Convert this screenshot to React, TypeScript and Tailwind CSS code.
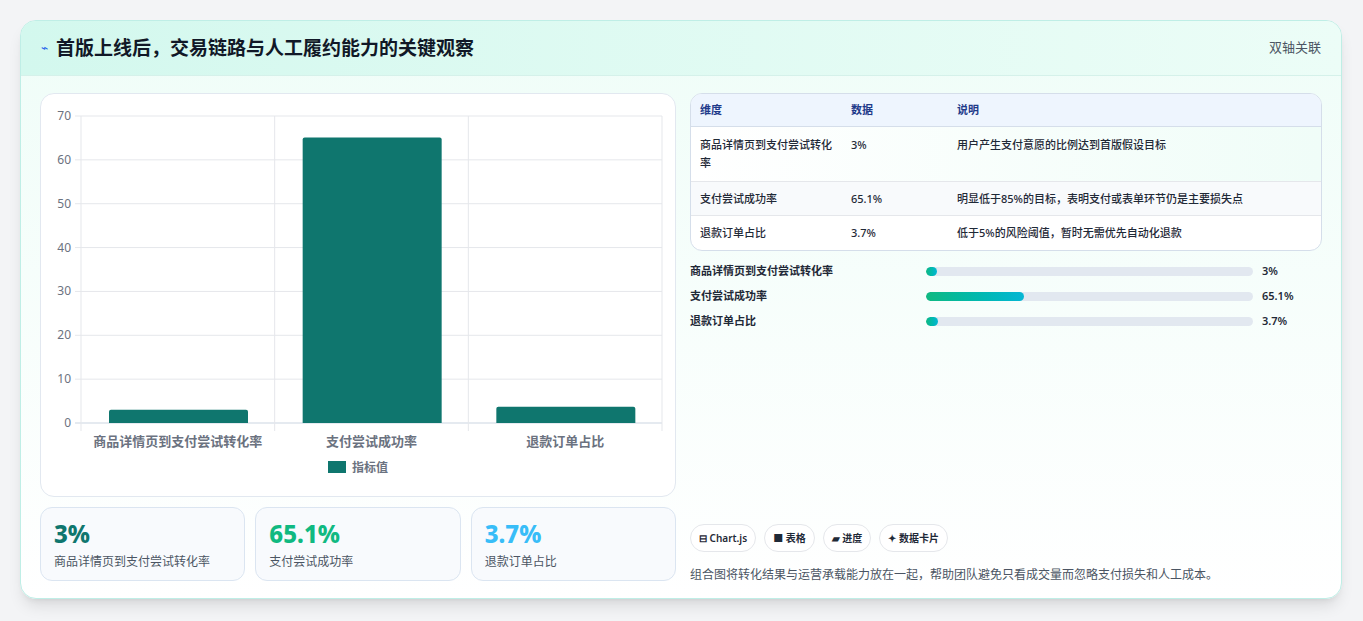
import React from "react";

const F = { fontFamily: '"Noto Sans", "Noto Sans CJK SC", sans-serif' };

function Chart() {
  const L = 40, R = 621, T = 22, B = 329;
  const k = (B - T) / 70;
  const cw = (R - L) / 3;
  const data = [
    { n: "商品详情页到支付尝试转化率", v: 3 },
    { n: "支付尝试成功率", v: 65.1 },
    { n: "退款订单占比", v: 3.7 },
  ];
  return (
    <svg width="635" height="401" className="block">
      {[0, 1, 2, 3, 4, 5, 6, 7].map((i) => {
        const y = B - i * 10 * k;
        return (
          <g key={i}>
            <line x1={L - 6} x2={R} y1={y} y2={y} stroke={i === 0 ? "#cbd5e1" : "#e5e7eb"} />
            <text x={L - 10} y={y + 4} textAnchor="end" fontSize="12" fill="#6b7280" style={F}>{i * 10}</text>
          </g>
        );
      })}
      {[0, 1, 2, 3].map((i) => (
        <line key={i} x1={L + i * cw} x2={L + i * cw} y1={T} y2={B + 8} stroke="#e5e7eb" />
      ))}
      {data.map((d, i) => {
        const h = d.v * k;
        const x = L + i * cw + 28;
        return (
          <g key={i}>
            <path d={`M${x} ${B} V${B - h + 2} Q${x} ${B - h} ${x + 2} ${B - h} H${x + 137} Q${x + 139} ${B - h} ${x + 139} ${B - h + 2} V${B}Z`} fill="#0f766e" />
            <text x={L + i * cw + cw / 2} y={B + 23} textAnchor="middle" fontSize="13" fontWeight="600" fill="#6b7280" style={F}>{d.n}</text>
          </g>
        );
      })}
      <rect x="287" y="367" width="18" height="12" fill="#0f766e" />
      <text x="311" y="378" fontSize="12" fontWeight="600" fill="#6b7280" style={F}>指标值</text>
    </svg>
  );
}

export default function App() {
  const rows = [
    ["商品详情页到支付尝试转化率", "3%", "用户产生支付意愿的比例达到首版假设目标"],
    ["支付尝试成功率", "65.1%", "明显低于85%的目标，表明支付或表单环节仍是主要损失点"],
    ["退款订单占比", "3.7%", "低于5%的风险阈值，暂时无需优先自动化退款"],
  ];
  const bars = [
    ["商品详情页到支付尝试转化率", 3, "3%"],
    ["支付尝试成功率", 30, "65.1%"],
    ["退款订单占比", 3.7, "3.7%"],
  ] as const;
  return (
    <div className="w-[1363px] h-[621px] bg-[#f3f4f6] pt-[20px] pl-[20px]" style={F}>
      <div className="w-[1322px] h-[579px] rounded-[16px] border border-[#bfeee6] overflow-hidden bg-gradient-to-b from-[#effdf8] to-white shadow-lg">
        <div className="h-[55px] flex items-center justify-between px-[20px] bg-gradient-to-r from-[#d3f8ee] to-[#ecfdf7] border-b border-[#d5f1ea]">
          <div className="flex items-center gap-[8px]">
            <span className="text-[#2563eb] text-[12px]">⌁</span>
            <span className="text-[19px] font-bold text-[#111827]">首版上线后，交易链路与人工履约能力的关键观察</span>
          </div>
          <span className="text-[13px] text-[#4b5563]">双轴关联</span>
        </div>
        <div className="flex gap-[14px] px-[19px] pt-[17px]">
          <div className="w-[636px] flex flex-col gap-[10px]">
            <div className="h-[404px] rounded-[14px] border border-[#e2e8f0] bg-white">
              <Chart />
            </div>
            <div className="grid grid-cols-3 gap-[10px]">
              {[
                ["3%", "text-[#0f766e]", "商品详情页到支付尝试转化率"],
                ["65.1%", "text-[#10b981]", "支付尝试成功率"],
                ["3.7%", "text-[#38bdf8]", "退款订单占比"],
              ].map(([v, c, l]) => (
                <div key={l} className="h-[74px] rounded-[12px] border border-[#dbe5f1] bg-[#f8fafd] px-[13px] pt-[12px]">
                  <div className={`text-[24px] font-extrabold leading-[28px] ${c}`}>{v}</div>
                  <div className="text-[12px] text-[#4b5563] mt-[5px]">{l}</div>
                </div>
              ))}
            </div>
          </div>
          <div className="w-[634px] flex flex-col">
            <div className="rounded-[12px] border border-[#d5deea] overflow-hidden bg-white">
              <div className="flex h-[33px] items-center bg-[#eef5fe] border-b border-[#d5deea] text-[11px] text-[#1e3a8a] font-semibold px-[9px]">
                <div className="w-[151px]">维度</div>
                <div className="w-[106px]">数据</div>
                <div>说明</div>
              </div>
              {rows.map((r, i) => (
                <div key={i} className={`flex px-[9px] text-[11px] text-[#1f2937] font-medium ${i < 2 ? "border-b border-[#e5e7eb]" : ""} ${i === 0 ? "py-[9px] bg-gradient-to-r from-white to-[#f0fdf8]" : "h-[34px] items-center"} ${i === 1 ? "bg-[#f8fafc]" : ""}`}>
                  <div className="w-[151px] pr-[10px] leading-[18px]">{r[0]}</div>
                  <div className="w-[106px] leading-[18px]">{r[1]}</div>
                  <div className="leading-[18px]">{r[2]}</div>
                </div>
              ))}
            </div>
            <div className="flex flex-col gap-[10px] mt-[13px]">
              {bars.map(([n, w, v]) => (
                <div key={n} className="flex items-center h-[15px] text-[11px] font-semibold text-[#1f2937]">
                  <div className="w-[236px]">{n}</div>
                  <div className="w-[327px] h-[9px] rounded-full bg-[#e2e8f0] overflow-hidden">
                    <div className="h-full rounded-full bg-gradient-to-r from-[#10b981] to-[#06b6d4] min-w-[11px]" style={{ width: `${w}%` }} />
                  </div>
                  <div className="ml-[9px]">{v}</div>
                </div>
              ))}
            </div>
            <div className="flex gap-[8px] mt-[195px]">
              {["⊟ Chart.js", "■ 表格", "▰ 进度", "✦ 数据卡片"].map((c) => (
                <span key={c} className="h-[28px] px-[8px] rounded-full border border-[#e5e7eb] bg-white flex items-center text-[10px] font-semibold text-[#1f2937]">{c}</span>
              ))}
            </div>
            <div className="mt-[14px] text-[12px] text-[#4b5563]">组合图将转化结果与运营承载能力放在一起，帮助团队避免只看成交量而忽略支付损失和人工成本。</div>
          </div>
        </div>
      </div>
    </div>
  );
}
